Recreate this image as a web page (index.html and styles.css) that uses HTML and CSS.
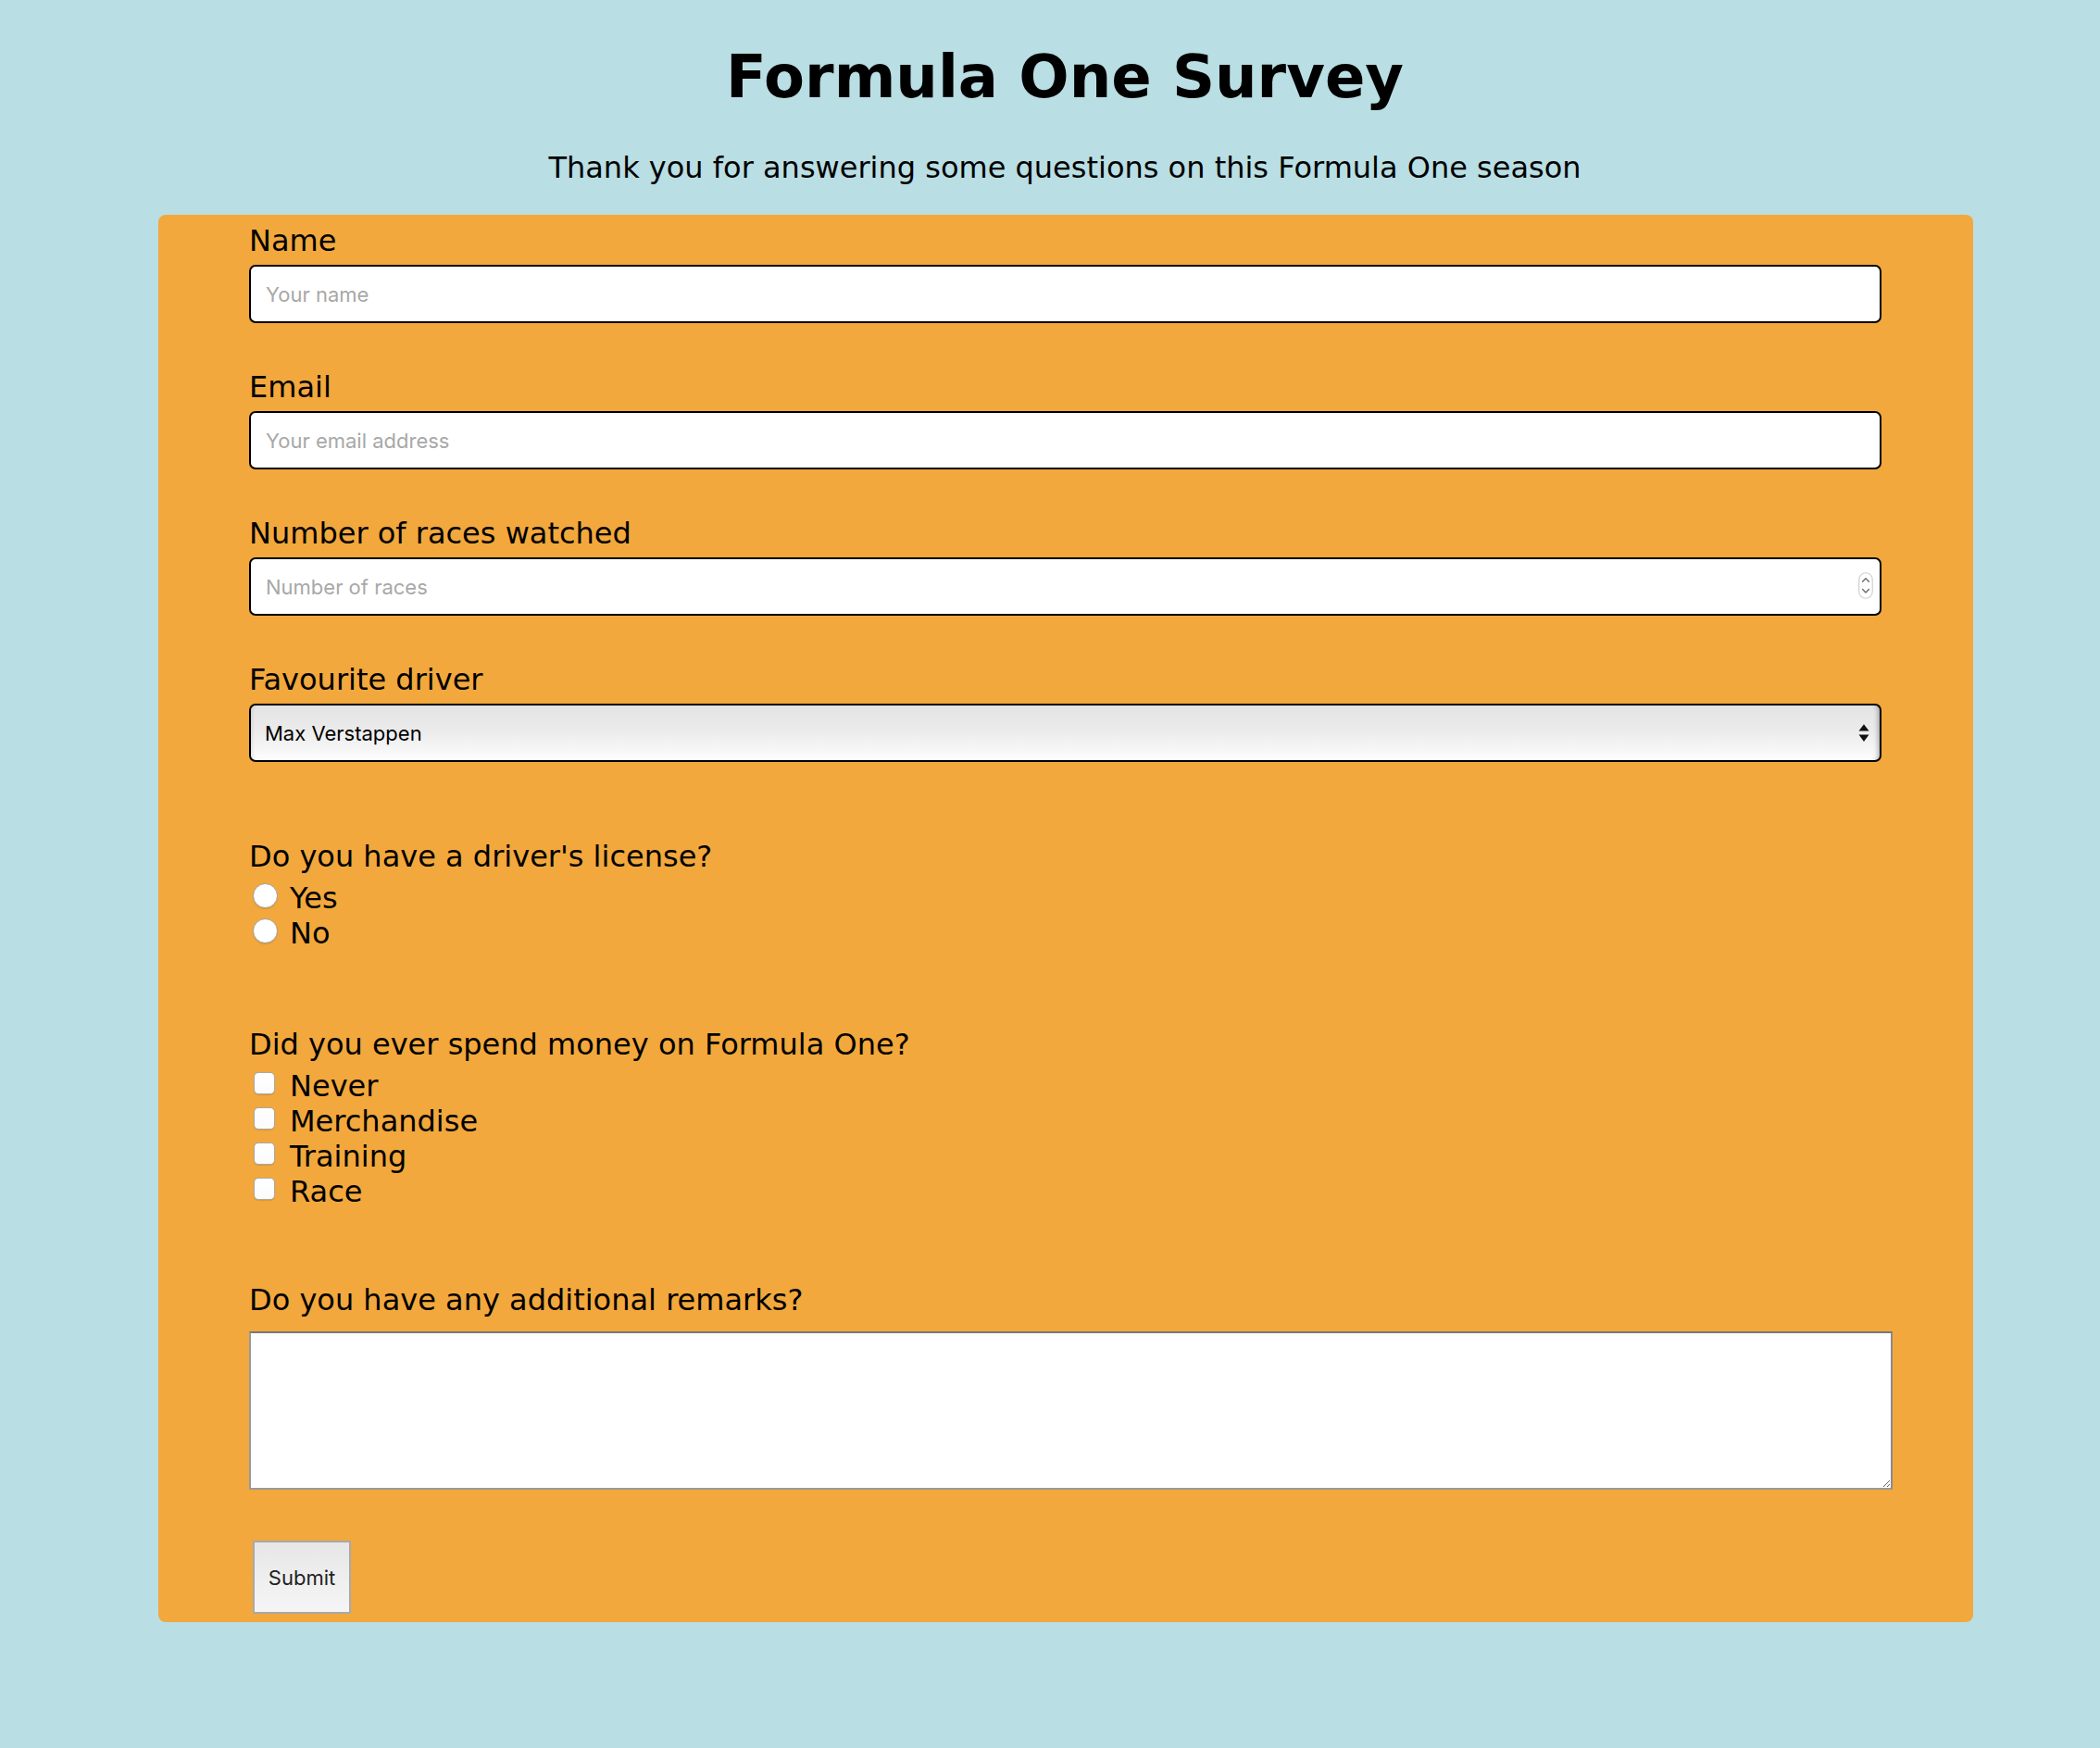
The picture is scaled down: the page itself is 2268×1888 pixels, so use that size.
FILE: index.html
```html
<!DOCTYPE html>
<html lang="en">
<head>
<meta charset="utf-8">
<title>Formula One Survey</title>
<link rel="stylesheet" href="styles.css">
</head>
<body>
<div class="page">
  <h1 class="title" id="title">Formula One Survey</h1>
  <p class="subtitle" id="description">Thank you for answering some questions on this Formula One season</p>

  <form class="survey" id="survey-form">
    <div class="field">
      <label class="field-label" for="name">Name</label>
      <input class="text-input" id="name" type="text" placeholder="Your name">
    </div>

    <div class="field">
      <label class="field-label" for="email">Email</label>
      <input class="text-input" id="email" type="email" placeholder="Your email address">
    </div>

    <div class="field">
      <label class="field-label" for="number">Number of races watched</label>
      <div class="control-wrap">
        <input class="text-input number-input" id="number" type="number" placeholder="Number of races">
        <span class="spinner" aria-hidden="true">
          <svg width="16" height="29" viewBox="0 0 16 29">
            <rect x="0.75" y="0.75" width="14.5" height="27.5" rx="7.25" fill="#fff" stroke="#d0d0d0" stroke-width="1.2"/>
            <path d="M4.6 10.2 L8 6.8 L11.4 10.2" fill="none" stroke="#6b6b6b" stroke-width="1.4" stroke-linecap="round" stroke-linejoin="round"/>
            <path d="M4.6 18.6 L8 22 L11.4 18.6" fill="none" stroke="#6b6b6b" stroke-width="1.4" stroke-linecap="round" stroke-linejoin="round"/>
          </svg>
        </span>
      </div>
    </div>

    <div class="field">
      <label class="field-label" for="dropdown">Favourite driver</label>
      <div class="control-wrap">
        <select class="select-input" id="dropdown">
          <option>Max Verstappen</option>
          <option>Lewis Hamilton</option>
          <option>Charles Leclerc</option>
          <option>Lando Norris</option>
        </select>
        <span class="select-arrows" aria-hidden="true">
          <svg width="12" height="20" viewBox="0 0 12 20">
            <polygon points="0.5,7.5 6,0.3 11.5,7.5" fill="#111"/>
            <polygon points="0.5,11.5 11.5,11.5 6,19" fill="#111"/>
          </svg>
        </span>
      </div>
    </div>

    <div class="group group-radio">
      <p class="question">Do you have a driver's license?</p>
      <label class="option"><input class="radio" type="radio" name="license" value="yes">Yes</label>
      <label class="option"><input class="radio" type="radio" name="license" value="no">No</label>
    </div>

    <div class="group group-check">
      <p class="question">Did you ever spend money on Formula One?</p>
      <label class="option"><input class="check" type="checkbox" value="never">Never</label>
      <label class="option"><input class="check" type="checkbox" value="merchandise">Merchandise</label>
      <label class="option"><input class="check" type="checkbox" value="training">Training</label>
      <label class="option"><input class="check" type="checkbox" value="race">Race</label>
    </div>

    <div class="group group-remarks">
      <label class="question" for="remarks">Do you have any additional remarks?</label>
      <textarea class="remarks" id="remarks"></textarea>
    </div>

    <button class="submit" id="submit" type="submit">Submit</button>
  </form>
</div>
</body>
</html>
```
FILE: styles.css
```css
html, body {
  margin: 0;
  padding: 0;
}

body {
  background: #b9dee3;
  color: #000;
  font-family: "DejaVu Sans", Verdana, sans-serif;
  font-size: 32px;
}

.page {
  padding: 46px 0 136px 32px;
}

.title {
  margin: 0;
  font-size: 64px;
  font-weight: bold;
  line-height: 75px;
  text-align: center;
}

.subtitle {
  margin: 42px 0 0;
  line-height: 37px;
  text-align: center;
}

.survey {
  display: flex;
  flex-direction: column;
  align-items: flex-start;
  width: 1960px;
  box-sizing: border-box;
  margin: 32px 0 0 139px;
  padding: 10px 0 9px 98px;
  background: #f2a83c;
  border-radius: 8px;
}

.field {
  display: flex;
  flex-direction: column;
  align-items: flex-start;
  margin-bottom: 51px;
}

.field:nth-of-type(4) {
  margin-bottom: 0;
}

.field-label {
  display: block;
  line-height: 37px;
  margin-bottom: 7px;
}

.control-wrap {
  position: relative;
}

.text-input,
.select-input {
  display: block;
  width: 1763px;
  height: 63px;
  box-sizing: border-box;
  margin: 0;
  padding: 0 16px;
  border: 2px solid #000;
  border-radius: 7px;
  background: #fff;
  font-family: Inter, "Liberation Sans", sans-serif;
  font-size: 22px;
  color: #000;
  outline: none;
}

.text-input::placeholder {
  color: #a8a8a8;
}

.number-input {
  -moz-appearance: textfield;
}

.number-input::-webkit-inner-spin-button,
.number-input::-webkit-outer-spin-button {
  -webkit-appearance: none;
  margin: 0;
}

.spinner {
  position: absolute;
  top: 16px;
  right: 9px;
  display: flex;
}

.select-input {
  -webkit-appearance: none;
  appearance: none;
  padding-left: 15px;
  background: linear-gradient(to bottom, #e4e4e4 0%, #ebebeb 45%, #f6f6f6 80%, #fdfdfd 100%);
  box-shadow: inset 4px 0 4px -3px rgba(0, 0, 0, 0.12), inset -7px 0 5px -5px rgba(0, 0, 0, 0.28);
}

.select-arrows {
  position: absolute;
  top: 22px;
  right: 13px;
  display: flex;
}

.group {
  display: flex;
  flex-direction: column;
  align-items: flex-start;
}

.group-radio {
  margin-top: 84px;
}

.group-check {
  margin-top: 83px;
}

.group-remarks {
  margin-top: 80px;
}

.question {
  display: block;
  margin: 0 0 7px;
  line-height: 37px;
}

.group-check .question {
  margin-bottom: 7px;
}

.option {
  display: flex;
  align-items: flex-start;
  height: 38px;
  line-height: 38px;
}

.radio {
  -webkit-appearance: none;
  appearance: none;
  width: 27px;
  height: 27px;
  box-sizing: border-box;
  margin: 3px 13px 0 4px;
  border: 1px solid #a4a4a4;
  border-radius: 50%;
  background: radial-gradient(circle at 50% 40%, #ffffff 0%, #ffffff 60%, #f1f1f1 100%);
  box-shadow: 0 1px 1px rgba(0, 0, 0, 0.12);
}

.check {
  -webkit-appearance: none;
  appearance: none;
  width: 23px;
  height: 24px;
  box-sizing: border-box;
  margin: 4px 16px 0 5px;
  border: 1px solid #a9a9a9;
  border-radius: 5px;
  background: linear-gradient(to bottom, #ffffff 0%, #fbfbfb 100%);
  box-shadow: 0 1px 1px rgba(0, 0, 0, 0.1);
}

.group-remarks .question {
  margin-bottom: 15px;
}

.remarks {
  display: block;
  width: 1775px;
  height: 171px;
  box-sizing: border-box;
  margin: 0;
  padding: 4px;
  border-style: solid;
  border-width: 2px;
  border-color: #777 #8a8a8a #9a9a9a #999;
  background: #fff;
  font-family: Inter, "Liberation Sans", sans-serif;
  font-size: 22px;
  outline: none;
}

.submit {
  display: block;
  width: 106px;
  height: 79px;
  box-sizing: border-box;
  margin: 55px 0 0 4px;
  padding: 0;
  border: 2px solid #a9a9a9;
  border-radius: 0;
  background: linear-gradient(to bottom, #e6e6e6 0%, #f0f0f0 60%, #f5f5f5 100%);
  color: #222;
  font-family: Inter, "Liberation Sans", sans-serif;
  font-size: 22px;
}
```
